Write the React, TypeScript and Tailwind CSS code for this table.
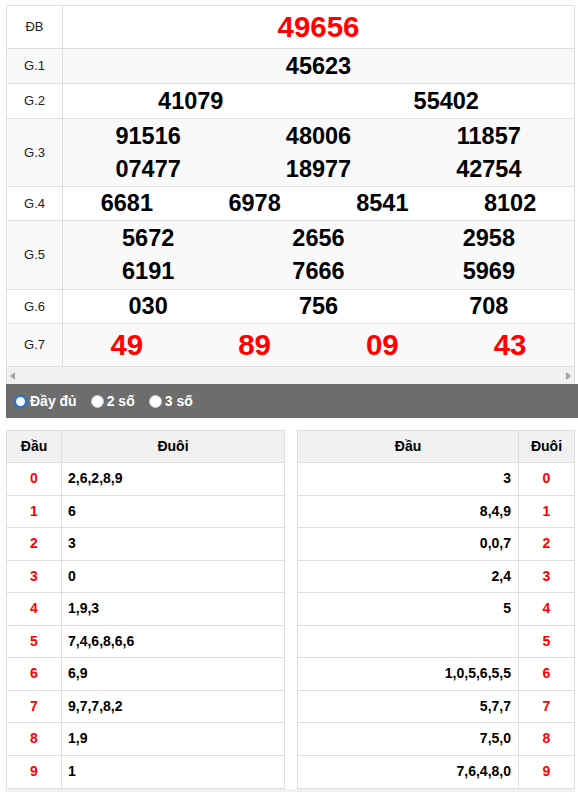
import React from "react";

interface Prize {
  label: string;
  cols: number;
  values: string[];
  h: string;
  size: string;
  red?: boolean;
  shade?: boolean;
}

const prizes: Prize[] = [
  { label: "ĐB", cols: 1, values: ["49656"], h: "h-[43px]", size: "text-[29.5px]", red: true },
  { label: "G.1", cols: 1, values: ["45623"], h: "h-[35px]", size: "text-[23.5px]", shade: true },
  { label: "G.2", cols: 2, values: ["41079", "55402"], h: "h-[35px]", size: "text-[23.5px]" },
  {
    label: "G.3",
    cols: 3,
    values: ["91516", "48006", "11857", "07477", "18977", "42754"],
    h: "h-[68px]",
    size: "text-[23.5px]",
    shade: true,
  },
  { label: "G.4", cols: 4, values: ["6681", "6978", "8541", "8102"], h: "h-[34px]", size: "text-[23.5px]" },
  {
    label: "G.5",
    cols: 3,
    values: ["5672", "2656", "2958", "6191", "7666", "5969"],
    h: "h-[69px]",
    size: "text-[23.5px]",
    shade: true,
  },
  { label: "G.6", cols: 3, values: ["030", "756", "708"], h: "h-[34px]", size: "text-[23.5px]" },
  { label: "G.7", cols: 4, values: ["49", "89", "09", "43"], h: "h-[43px]", size: "text-[29.5px]", red: true, shade: true },
];

const gridCols: Record<number, string> = {
  1: "grid-cols-1",
  2: "grid-cols-2",
  3: "grid-cols-3",
  4: "grid-cols-4",
};

const dau = ["2,6,2,8,9", "6", "3", "0", "1,9,3", "7,4,6,8,6,6", "6,9", "9,7,7,8,2", "1,9", "1"];
const duoi = ["3", "8,4,9", "0,0,7", "2,4", "5", "", "1,0,5,6,5,5", "5,7,7", "7,5,0", "7,6,4,8,0"];

function PrizeRow({ p }: { p: Prize }) {
  return (
    <div className={`flex border-b border-[#dedede] ${p.h} ${p.shade ? "bg-[#f9f9f9]" : "bg-white"}`}>
      <div className="w-[56px] shrink-0 border-r border-[#dedede] flex items-center justify-center text-[13px] text-[#222]">
        {p.label}
      </div>
      <div className={`flex-1 grid ${gridCols[p.cols]} content-center`}>
        {p.values.map((v, i) => (
          <div
            key={i}
            className={`text-center font-bold leading-[33px] ${p.size} ${p.red ? "text-[#ff0000] -mt-[2px]" : "text-black"}`}
          >
            {v}
          </div>
        ))}
      </div>
    </div>
  );
}

function Radio({ checked, label }: { checked?: boolean; label: string }) {
  return (
    <label className="flex items-center gap-[3px] mr-[14px]">
      <span
        className={`w-[13px] h-[13px] rounded-full bg-white ${
          checked ? "border-[2.5px] border-[#1a73e8]" : "border border-[#ccc]"
        }`}
      />
      <span className="text-white font-bold text-[14px]">{label}</span>
    </label>
  );
}

export default function App() {
  return (
    <div className="w-[578px] h-[792px] bg-white overflow-hidden pt-[5px] pl-[6px] font-['Liberation_Sans',Arial,sans-serif]">
      <div className="w-[569px] border border-b-0 border-[#dedede]">
        {prizes.map((p) => (
          <PrizeRow key={p.label} p={p} />
        ))}
        <div className="h-[17px] bg-[#f1f1f1] flex items-center justify-between px-[3px]">
          <svg width="5" height="8" viewBox="0 0 5 8">
            <path d="M5 0 L0 4 L5 8 Z" fill="#a3a3a3" />
          </svg>
          <svg width="5" height="8" viewBox="0 0 5 8">
            <path d="M0 0 L5 4 L0 8 Z" fill="#a3a3a3" />
          </svg>
        </div>
      </div>
      <div className="w-[572px] h-[34px] bg-[#6d6d6d] flex items-center pl-[8px]">
        <Radio checked label="Đầy đủ" />
        <Radio label="2 số" />
        <Radio label="3 số" />
      </div>

      <div className="flex gap-[12px] mt-[12px] w-[569px]">
        <div className="w-[279px] border border-[#dedede] text-[14px]">
          <div className="flex h-[32px] bg-[#f1f1f1] border-b border-[#dedede] font-bold">
            <div className="w-[55px] border-r border-[#dedede] flex items-center justify-center">Đầu</div>
            <div className="flex-1 flex items-center justify-center">Đuôi</div>
          </div>
          {dau.map((v, i) => (
            <div key={i} className={`flex h-[32.5px] ${i < 9 ? "border-b border-[#dedede]" : ""}`}>
              <div className="w-[55px] border-r border-[#dedede] flex items-center justify-center font-bold text-[#ff0000]">
                {i}
              </div>
              <div className="flex-1 flex items-center pl-[6px] font-bold text-black">{v}</div>
            </div>
          ))}
        </div>
        <div className="w-[278px] border border-[#dedede] text-[14px]">
          <div className="flex h-[32px] bg-[#f1f1f1] border-b border-[#dedede] font-bold">
            <div className="flex-1 border-r border-[#dedede] flex items-center justify-center">Đầu</div>
            <div className="w-[55px] flex items-center justify-center">Đuôi</div>
          </div>
          {duoi.map((v, i) => (
            <div key={i} className={`flex h-[32.5px] ${i < 9 ? "border-b border-[#dedede]" : ""}`}>
              <div className="flex-1 border-r border-[#dedede] flex items-center justify-end pr-[7px] font-bold text-black">
                {v}
              </div>
              <div className="w-[55px] flex items-center justify-center font-bold text-[#ff0000]">{i}</div>
            </div>
          ))}
        </div>
      </div>
      <div className="w-[569px] h-[6px] bg-[#f1f1f1]" />
    </div>
  );
}
